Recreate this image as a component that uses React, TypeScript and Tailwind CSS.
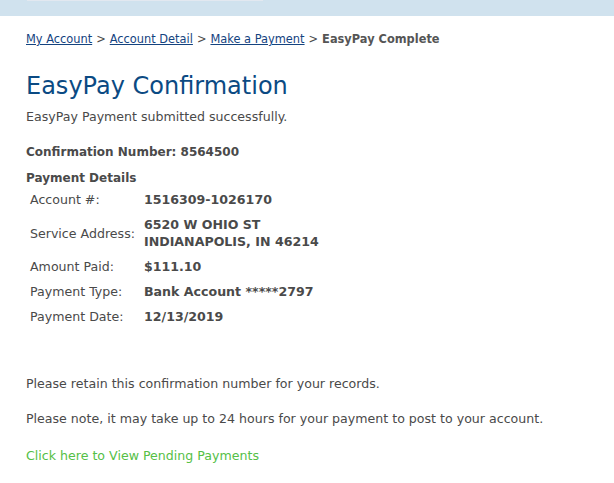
import React from "react";

const rows: { label: string; value: React.ReactNode; tall?: boolean }[] = [
  { label: "Account #:", value: "1516309-1026170" },
  {
    label: "Service Address:",
    value: (
      <>
        6520 W OHIO ST
        <br />
        INDIANAPOLIS, IN 46214
      </>
    ),
    tall: true,
  },
  { label: "Amount Paid:", value: "$111.10" },
  { label: "Payment Type:", value: "Bank Account *****2797" },
  { label: "Payment Date:", value: "12/13/2019" },
];

export default function App() {
  return (
    <div
      className="w-[614px] h-[483px] bg-white text-[#4a4a4a] overflow-hidden"
      style={{ fontFamily: '"DejaVu Sans", Verdana, sans-serif' }}
    >
      <div className="h-4 bg-[#d0e2ee] pl-[27px]">
        <div className="w-[236px] h-px bg-[#e2e8f0]" />
      </div>
      <div className="pl-[26px] pt-[16px]">
        <nav className="text-[11.4px] leading-[14px] flex items-center gap-[4px]">
          <a className="text-[#14437f] underline" href="#">My Account</a>
          <span>&gt;</span>
          <a className="text-[#14437f] underline" href="#">Account Detail</a>
          <span>&gt;</span>
          <a className="text-[#14437f] underline" href="#">Make a Payment</a>
          <span>&gt;</span>
          <span className="font-bold text-[#555]">EasyPay Complete</span>
        </nav>
        <h1 className="mt-[25px] text-[24px] leading-[30px] text-[#0b4a83]">
          EasyPay Confirmation
        </h1>
        <p className="mt-[8px] text-[12.6px] leading-[16px]">
          EasyPay Payment submitted successfully.
        </p>
        <p className="mt-[19px] text-[12px] leading-[16px] font-bold">
          Confirmation Number: 8564500
        </p>
        <p className="mt-[10px] text-[12px] leading-[16px] font-bold">
          Payment Details
        </p>
        <div className="mt-[1px] ml-[4px] grid grid-cols-[114px_1fr] text-[12.6px] leading-[17px]">
          {rows.map((r) => (
            <React.Fragment key={r.label}>
              <div className={`flex items-center whitespace-nowrap ${r.tall ? "h-[42px]" : "h-[25px]"}`}>
                {r.label}
              </div>
              <div className={`flex items-center font-bold ${r.tall ? "h-[42px]" : "h-[25px]"}`}>
                <div>{r.value}</div>
              </div>
            </React.Fragment>
          ))}
        </div>
        <p className="mt-[47px] text-[12.6px] leading-[16px]">
          Please retain this confirmation number for your records.
        </p>
        <p className="mt-[19px] text-[12.6px] leading-[16px]">
          Please note, it may take up to 24 hours for your payment to post to your account.
        </p>
        <a href="#" className="block mt-[21px] text-[12.6px] leading-[16px] text-[#55c046]">
          Click here to View Pending Payments
        </a>
      </div>
    </div>
  );
}
